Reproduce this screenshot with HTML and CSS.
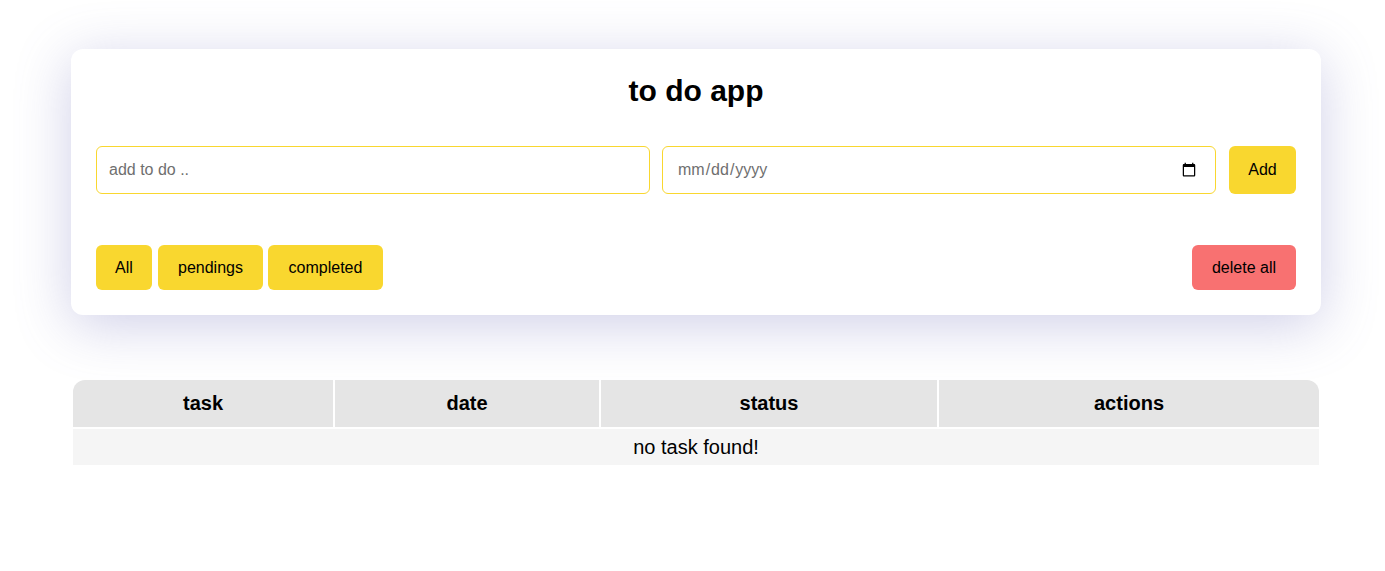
FILE: index.html
```html
<!DOCTYPE html>
<html lang="en">
<head>
<meta charset="utf-8">
<title>to do app</title>
<link rel="stylesheet" href="styles.css">
</head>
<body>
<main class="container">
  <section class="card">
    <h1 class="title">to do app</h1>
    <div class="add-row">
      <input class="field" type="text" placeholder="add to do ..">
      <input class="field date" type="date">
      <button class="btn add">Add</button>
    </div>
    <div class="filter-row">
      <div class="filters">
        <button class="btn f-all">All</button>
        <button class="btn f-pending">pendings</button>
        <button class="btn f-done">completed</button>
      </div>
      <button class="btn danger">delete all</button>
    </div>
  </section>
  <table class="tasks">
    <colgroup>
      <col class="c1"><col class="c2"><col class="c3"><col class="c4">
    </colgroup>
    <thead>
      <tr><th>task</th><th>date</th><th>status</th><th>actions</th></tr>
    </thead>
    <tbody>
      <tr><td colspan="4">no task found!</td></tr>
    </tbody>
  </table>
</main>
</body>
</html>
```
FILE: styles.css
```css
* { box-sizing: border-box; }
html, body { margin: 0; padding: 0; background: #fff; }
body {
  font-family: "Liberation Sans", Arial, sans-serif;
  color: #000;
}
.container {
  width: 1250px;
  margin: 49px 0 0 71px;
}
.card {
  background: #fff;
  border-radius: 12px;
  padding: 25px;
  box-shadow: 0 10px 55px rgba(105, 105, 185, 0.32);
}
.title {
  margin: 0;
  text-align: center;
  font-size: 30px;
  font-weight: 700;
  line-height: 34px;
}
.add-row {
  display: grid;
  grid-template-columns: minmax(0, 1fr) minmax(0, 1fr) 68px;
  column-gap: 12px;
  margin-top: 38px;
}
.field {
  width: 100%;
  height: 48px;
  border: 1px solid #f9d72f;
  border-radius: 6px;
  padding: 0 12px;
  font-family: "Liberation Sans", Arial, sans-serif;
  font-size: 16px;
  color: #6f6f6f;
  background: #fff;
  outline: none;
}
.field::placeholder { color: #6f6f6f; }
.field.date { padding: 0 16px 0 14px; }
.btn {
  border: none;
  background: #f9d72f;
  border-radius: 6px;
  padding: 0;
  font-family: "Liberation Sans", Arial, sans-serif;
  font-size: 16px;
  color: #000;
  text-align: center;
  cursor: pointer;
}
.btn.add { height: 48px; width: 67px; justify-self: end; }
.filter-row {
  display: flex;
  justify-content: space-between;
  align-items: center;
  margin-top: 51px;
}
.filters { display: flex; gap: 6px; }
.filter-row .btn { height: 45px; }
.f-all { width: 56px; }
.f-pending { width: 105px; margin-right: -1px; }
.f-done { width: 115px; }
.btn.danger { background: #f87171; width: 104px; }
.tasks {
  width: 1250px;
  margin-top: 63px;
  border-collapse: separate;
  border-spacing: 2px;
  table-layout: fixed;
  font-size: 20px;
}
.c1 { width: 260px; }
.c2 { width: 264px; }
.c3 { width: 336px; }
.c4 { width: 380px; }
.tasks th {
  background: #e5e5e5;
  font-weight: 700;
  height: 47px;
  padding: 0;
  text-align: center;
}
.tasks th:first-child { border-top-left-radius: 12px; }
.tasks th:last-child { border-top-right-radius: 12px; }
.tasks td {
  background: #f5f5f5;
  height: 36px;
  padding: 0;
  text-align: center;
}
```
